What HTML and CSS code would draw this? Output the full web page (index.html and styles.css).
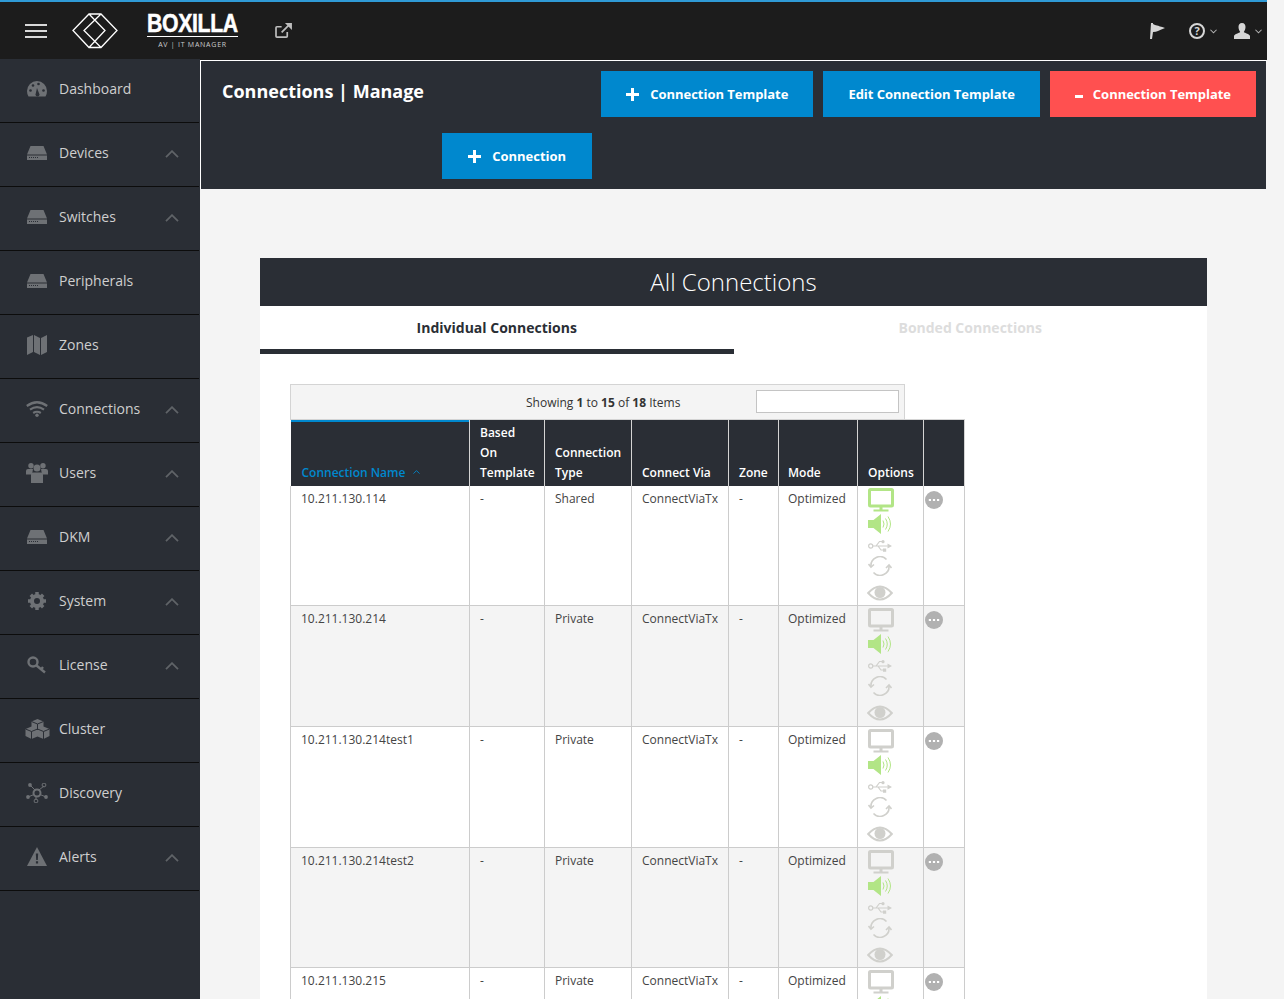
FILE: index.html
```html
<!DOCTYPE html>
<html lang="en">
<head>
<meta charset="utf-8">
<title>Connections | Manage</title>
<link rel="stylesheet" href="styles.css">
</head>
<body>
<svg class="defs" width="0" height="0" aria-hidden="true">
  <symbol id="i-box" viewBox="0 0 20 14"><path fill="currentColor" d="M3.500 0h13L20 8.500H0z"/><path fill="currentColor" d="M0 9.500h20V14H0z"/><path stroke="#2a2e35" stroke-width="1" stroke-dasharray="1 1" d="M2 11.500h9"/></symbol>
  <symbol id="i-monitor" viewBox="0 0 26 24"><rect x="1.500" y="1.500" width="23" height="16.500" rx="1" fill="none" stroke="currentColor" stroke-width="3"/><path fill="currentColor" d="M11.500 19h3v2.500h6V23.500h-15V21.500h6z"/></symbol>
  <symbol id="i-speaker" viewBox="0 0 24 20"><path fill="currentColor" d="M0 6h5.500L13 0v20l-7.500-6H0z"/><path fill="none" stroke="currentColor" d="M15 6.500q2 3.500 0 7M17.500 4.500q3.500 5.500 0 11M20 2.500q5 7.500 0 15"/></symbol>
  <symbol id="i-usb" viewBox="0 0 24 12"><circle cx="2.700" cy="6" r="2.100" fill="none" stroke="currentColor" stroke-width="1.200"/><path fill="none" stroke="currentColor" stroke-width="1.200" d="M4.800 6h15M8 6l3.500-4.500H14M10 6l3 4h2"/><circle cx="15" cy="1.700" r="1.600" fill="currentColor"/><path fill="currentColor" d="M15 8.500h3.200v3.200H15zM19.500 3.500l4.500 2.500-4.500 2.500z"/></symbol>
  <symbol id="i-sync" viewBox="0 0 24 20"><path fill="none" stroke="currentColor" stroke-width="1.600" d="M3 10.500a9 9 0 0 1 15.500-7M21 9.500a9 9 0 0 1-15.500 7"/><path fill="none" stroke="currentColor" stroke-width="1.600" d="M.5 8l2.500 3 3-2.500M18 12l3-3 2.500 3"/></symbol>
  <symbol id="i-eye" viewBox="0 0 26 16"><path fill="none" stroke="currentColor" stroke-width="2" d="M1.200 8q11.800-13 23.600 0q-11.800 13-23.600 0z"/><circle cx="13" cy="7.500" r="5.500" fill="currentColor"/></symbol>
  <symbol id="i-chev" viewBox="0 0 14 8"><path fill="none" stroke="currentColor" stroke-width="1.800" d="M1 7.200l6-6 6 6"/></symbol>
  <symbol id="i-more" viewBox="0 0 18 18"><circle cx="9" cy="9" r="9" fill="#b1b1b1"/><path fill="#fff" d="M3.800 8h2.200v2H3.800zM7.900 8h2.200v2H7.900zM12 8h2.200v2H12z"/></symbol>
  <symbol id="i-plus" viewBox="0 0 13 13"><path fill="#fff" d="M5 0h3v5h5v3H8v5H5V8H0V5h5z"/></symbol>
  <symbol id="i-down" viewBox="0 0 8 5"><path fill="none" stroke="#b5b5b5" stroke-width="1.200" d="M.5.500L4 4 7.500.500"/></symbol>
</svg>

<header class="topbar">
  <svg class="burger" viewBox="0 0 22 14" width="22" height="14"><path stroke="#d8d8d8" stroke-width="2" d="M0 1h22M0 7h22M0 13h22"/></svg>
  <svg class="logo-mark" viewBox="0 0 46 36" width="46" height="36"><path fill="none" stroke="#fff" stroke-width="1.300" d="M1 17.500L17 1h12l16 16.500L29 34.500H17zM17 1l16 16.500L17 34.500M29 1L12 17.500l17 17"/></svg>
  <div class="brand">
    <div class="brand-name"><span class="brand-word">BOXILLA</span></div>
    <div class="brand-sub">AV | IT MANAGER</div>
  </div>
  <svg class="ext" viewBox="0 0 18 16" width="17" height="15"><path fill="none" stroke="#bdbdbd" stroke-width="1.800" d="M13 9.500V14a1 1 0 0 1-1 1H2a1 1 0 0 1-1-1V5a1 1 0 0 1 1-1h5M7 10l8-8"/><path fill="#bdbdbd" d="M10.500 0H18v7.500z"/></svg>
  <div class="top-right">
    <svg class="top-flag" viewBox="0 0 15 16" width="15" height="16"><path fill="#d6d6d6" d="M1 0h2v1q2 1 4 1.500t8 2.500q-5 2-7 3t-5 1l-1 7H0z"/></svg>
    <span class="top-drop top-help"><svg viewBox="0 0 16 16" width="16" height="16"><circle cx="8" cy="8" r="7" fill="none" stroke="#d6d6d6" stroke-width="2"/><text x="8" y="12" text-anchor="middle" class="q">?</text></svg><svg width="7" height="5"><use href="#i-down"/></svg></span>
    <span class="top-drop top-user"><svg viewBox="0 0 16 16" width="16" height="16"><path fill="#d6d6d6" d="M8 0c2.500 0 3.500 2 3.500 4S10.500 8 9.800 9c1 1 5.700 2 6.200 4v3H0v-3c.500-2 5.200-3 6.200-4C5.500 8 4.500 6 4.500 4S5.500 0 8 0z"/></svg><svg width="7" height="5"><use href="#i-down"/></svg></span>
  </div>
</header>

<div class="shell">
  <nav class="sidebar">
    <a class="nav-item"><span class="nav-icon"><svg viewBox="0 0 20 16" width="20" height="16"><path fill="currentColor" d="M10 0a10 10 0 0 0-10 10q0 3 1.500 5.500h17Q20 13 20 10A10 10 0 0 0 10 0z"/><circle cx="3.500" cy="9.500" r="1.300" fill="#2a2e35"/><circle cx="6" cy="4.500" r="1.300" fill="#2a2e35"/><circle cx="11.500" cy="3" r="1.300" fill="#2a2e35"/><circle cx="16.500" cy="9.500" r="1.300" fill="#2a2e35"/><path fill="#2a2e35" d="M8.500 13.500L10 7l2.500 6.500a2 2 0 0 1-4 0z"/></svg></span><span class="nav-label">Dashboard</span></a>
    <a class="nav-item"><span class="nav-icon"><svg width="20" height="14"><use href="#i-box"/></svg></span><span class="nav-label">Devices</span><svg class="chev" width="14" height="8"><use href="#i-chev"/></svg></a>
    <a class="nav-item"><span class="nav-icon"><svg width="20" height="14"><use href="#i-box"/></svg></span><span class="nav-label">Switches</span><svg class="chev" width="14" height="8"><use href="#i-chev"/></svg></a>
    <a class="nav-item"><span class="nav-icon"><svg width="20" height="14"><use href="#i-box"/></svg></span><span class="nav-label">Peripherals</span></a>
    <a class="nav-item"><span class="nav-icon"><svg viewBox="0 0 20 20" width="20" height="20"><path fill="currentColor" d="M0 2.500l6-2.500v17l-6 3zM7 0l6 3v17l-6-3zM14 3l6-3v17l-6 3z"/></svg></span><span class="nav-label">Zones</span></a>
    <a class="nav-item"><span class="nav-icon"><svg viewBox="0 0 22 16" width="22" height="16"><path fill="none" stroke="currentColor" stroke-width="2.200" d="M.8 5q10.200-7.500 20.400 0M4 8.700q7-5 14 0M7.200 12q3.800-2.500 7.600 0"/><circle cx="11" cy="14.300" r="1.700" fill="currentColor"/></svg></span><span class="nav-label">Connections</span><svg class="chev" width="14" height="8"><use href="#i-chev"/></svg></a>
    <a class="nav-item"><span class="nav-icon"><svg viewBox="0 0 22 20" width="22" height="20"><circle cx="5" cy="2.700" r="2.700" fill="currentColor"/><circle cx="17" cy="2.700" r="2.700" fill="currentColor"/><circle cx="11" cy="5" r="3.500" fill="currentColor"/><path fill="currentColor" d="M0 8q0-2 2-2h5l-1 5.500H0zM15 6h5q2 0 2 2v3.500h-6zM7.500 9.500h7q2.500 0 2.500 2.500v8H5v-8q0-2.500 2.500-2.500z"/></svg></span><span class="nav-label">Users</span><svg class="chev" width="14" height="8"><use href="#i-chev"/></svg></a>
    <a class="nav-item"><span class="nav-icon"><svg width="20" height="14"><use href="#i-box"/></svg></span><span class="nav-label">DKM</span><svg class="chev" width="14" height="8"><use href="#i-chev"/></svg></a>
    <a class="nav-item"><span class="nav-icon"><svg viewBox="0 0 18 18" width="18" height="18"><circle cx="9" cy="9" r="5" fill="none" stroke="currentColor" stroke-width="4"/><path stroke="currentColor" stroke-width="3.500" d="M9 0v3M9 15v3M0 9h3M15 9h3M2.800 2.800l2 2M13.200 13.200l2 2M15.200 2.800l-2 2M4.800 13.200l-2 2"/></svg></span><span class="nav-label">System</span><svg class="chev" width="14" height="8"><use href="#i-chev"/></svg></a>
    <a class="nav-item"><span class="nav-icon"><svg viewBox="0 0 20 18" width="20" height="18"><circle cx="6" cy="6" r="4.500" fill="none" stroke="currentColor" stroke-width="2.400"/><path fill="none" stroke="currentColor" stroke-width="2.400" d="M9.500 9.500l8.500 7M14 13.500l2-2.500"/></svg></span><span class="nav-label">License</span><svg class="chev" width="14" height="8"><use href="#i-chev"/></svg></a>
    <a class="nav-item"><span class="nav-icon"><svg viewBox="0 0 25 20" width="25" height="20"><path fill="currentColor" d="M12.500 0l6 2.500v5l6 2.500v7l-6 3-6-2.500L6.500 20l-6-3v-7l6-2.500v-5z"/><path fill="none" stroke="#2a2e35" d="M6.500 2.500l6 2.500 6-2.500M12.500 5v6M.5 10l6 2.500 6-2.500 6 2.500 6-2.500M6.500 12.500V20M18.500 12.500V20"/></svg></span><span class="nav-label">Cluster</span></a>
    <a class="nav-item"><span class="nav-icon"><svg viewBox="0 0 22 20" width="22" height="20"><circle cx="11" cy="10" r="3.500" fill="none" stroke="currentColor" stroke-width="2"/><path stroke="currentColor" d="M5 3l4 4M18 3l-5 4M2 14l6-2.500M20 14l-6-2.500M10 14v3"/><circle cx="4" cy="2" r="1.900" fill="currentColor"/><circle cx="18" cy="2" r="1.900" fill="none" stroke="currentColor"/><circle cx="2" cy="14" r="1.900" fill="currentColor"/><circle cx="20" cy="14" r="1.900" fill="currentColor"/><circle cx="10" cy="18" r="1.900" fill="none" stroke="currentColor"/></svg></span><span class="nav-label">Discovery</span></a>
    <a class="nav-item"><span class="nav-icon"><svg viewBox="0 0 20 19" width="20" height="19"><path fill="currentColor" d="M10 0l10 19H0z"/><path fill="#2a2e35" d="M8.800 6.500h2.400l-.4 6.500H9.200zM8.900 14.300h2.200v2.200H8.900z"/></svg></span><span class="nav-label">Alerts</span><svg class="chev" width="14" height="8"><use href="#i-chev"/></svg></a>
  </nav>

  <main class="main">
    <section class="page-head">
      <h1 class="page-title">Connections | Manage</h1>
      <div class="head-actions">
        <button class="btn"><svg class="btn-icon" width="13" height="13"><use href="#i-plus"/></svg>Connection Template</button>
        <button class="btn">Edit Connection Template</button>
        <button class="btn btn-red"><span class="minus"></span>Connection Template</button>
        <button class="btn btn-conn"><svg class="btn-icon" width="13" height="13"><use href="#i-plus"/></svg>Connection</button>
      </div>
    </section>

    <section class="panel">
      <h2 class="panel-title">All Connections</h2>
      <div class="tabs">
        <div class="tab tab-active">Individual Connections</div>
        <div class="tab">Bonded Connections</div>
      </div>
      <div class="table-wrap">
        <div class="table-info">
          <span class="showing">Showing <b>1</b> to <b>15</b> of <b>18</b> Items</span>
          <input class="search" type="text" aria-label="Search">
        </div>
        <table class="grid">
          <colgroup><col class="c1"><col class="c2"><col class="c3"><col class="c4"><col class="c5"><col class="c6"><col class="c7"><col class="c8"></colgroup>
          <thead>
            <tr>
              <th class="sorted">Connection Name <svg class="caret" viewBox="0 0 14 8" width="7" height="4"><use href="#i-chev"/></svg></th>
              <th>Based On Template</th>
              <th>Connection Type</th>
              <th>Connect Via</th>
              <th>Zone</th>
              <th class="mode">Mode</th>
              <th>Options</th>
              <th></th>
            </tr>
          </thead>
          <tbody>
            <tr>
              <td>10.211.130.114</td><td>-</td><td>Shared</td><td>ConnectViaTx</td><td>-</td><td class="mode">Optimized</td>
              <td class="opts"><svg class="on" width="26" height="24"><use href="#i-monitor"/></svg><svg class="on" width="24" height="20"><use href="#i-speaker"/></svg><svg class="off" width="24" height="12"><use href="#i-usb"/></svg><svg class="off" width="24" height="20"><use href="#i-sync"/></svg><svg class="off" width="26" height="16"><use href="#i-eye"/></svg></td>
              <td class="more-cell"><svg width="18" height="18"><use href="#i-more"/></svg></td>
            </tr>
            <tr class="alt">
              <td>10.211.130.214</td><td>-</td><td>Private</td><td>ConnectViaTx</td><td>-</td><td class="mode">Optimized</td>
              <td class="opts"><svg class="off" width="26" height="24"><use href="#i-monitor"/></svg><svg class="on" width="24" height="20"><use href="#i-speaker"/></svg><svg class="off" width="24" height="12"><use href="#i-usb"/></svg><svg class="off" width="24" height="20"><use href="#i-sync"/></svg><svg class="off" width="26" height="16"><use href="#i-eye"/></svg></td>
              <td class="more-cell"><svg width="18" height="18"><use href="#i-more"/></svg></td>
            </tr>
            <tr>
              <td>10.211.130.214test1</td><td>-</td><td>Private</td><td>ConnectViaTx</td><td>-</td><td class="mode">Optimized</td>
              <td class="opts"><svg class="off" width="26" height="24"><use href="#i-monitor"/></svg><svg class="on" width="24" height="20"><use href="#i-speaker"/></svg><svg class="off" width="24" height="12"><use href="#i-usb"/></svg><svg class="off" width="24" height="20"><use href="#i-sync"/></svg><svg class="off" width="26" height="16"><use href="#i-eye"/></svg></td>
              <td class="more-cell"><svg width="18" height="18"><use href="#i-more"/></svg></td>
            </tr>
            <tr class="alt">
              <td>10.211.130.214test2</td><td>-</td><td>Private</td><td>ConnectViaTx</td><td>-</td><td class="mode">Optimized</td>
              <td class="opts"><svg class="off" width="26" height="24"><use href="#i-monitor"/></svg><svg class="on" width="24" height="20"><use href="#i-speaker"/></svg><svg class="off" width="24" height="12"><use href="#i-usb"/></svg><svg class="off" width="24" height="20"><use href="#i-sync"/></svg><svg class="off" width="26" height="16"><use href="#i-eye"/></svg></td>
              <td class="more-cell"><svg width="18" height="18"><use href="#i-more"/></svg></td>
            </tr>
            <tr>
              <td>10.211.130.215</td><td>-</td><td>Private</td><td>ConnectViaTx</td><td>-</td><td class="mode">Optimized</td>
              <td class="opts"><svg class="off" width="26" height="24"><use href="#i-monitor"/></svg><svg class="on" width="24" height="20"><use href="#i-speaker"/></svg><svg class="off" width="24" height="12"><use href="#i-usb"/></svg><svg class="off" width="24" height="20"><use href="#i-sync"/></svg><svg class="off" width="26" height="16"><use href="#i-eye"/></svg></td>
              <td class="more-cell"><svg width="18" height="18"><use href="#i-more"/></svg></td>
            </tr>
          </tbody>
        </table>
      </div>
    </section>
  </main>
</div>
</body>
</html>
```
FILE: styles.css
```css
* { box-sizing: border-box; }
html, body { height: 100%; }
body {
  margin: 0;
  height: 999px;
  overflow: hidden;
  background: #f4f4f4;
  font-family: "Open Sans", sans-serif;
  font-size: 13px;
  color: #333;
}
.defs { display: block; height: 0; }
.topbar {
  width: 1267px;
  height: 60px;
  background: #1c1c1c;
  border-top: 2px solid #2f9ad6;
  display: flex;
  align-items: center;
  padding: 0 5px 0 25px;
}
.logo-mark { margin-left: 25px; }
.brand { margin: 0 0 4px 29px; width: 91px; color: #fff; text-align: center; }
.brand-name { height: 25px; border-bottom: 1px solid #fff; line-height: 22px; margin-top: 1px; text-align: left; white-space: nowrap; }
.brand-word { display: inline-block; font-family: "Liberation Sans", sans-serif; font-weight: 700; font-size: 25px; letter-spacing: -.4px; transform: scaleX(.85); transform-origin: left center; -webkit-text-stroke: .5px #fff; }
.brand-sub { font-size: 7px; line-height: 14px; letter-spacing: .75px; color: #ccc; padding-top: 1px; height: 11px; }
.ext { margin: 0 0 2px 37px; }
.top-right { margin-left: auto; display: flex; align-items: center; }
.top-flag { margin-right: 24px; }
.top-drop { display: flex; align-items: center; gap: 5px; }
.top-help { margin-right: 17px; }
.q { font: 700 11px "Open Sans", sans-serif; fill: #d6d6d6; }

.shell { display: flex; width: 1284px; height: 939px; }
.sidebar { width: 200px; flex: none; margin-top: -1px; background: #2a2e35; }
.nav-item {
  height: 64px;
  width: 199px;
  display: flex;
  align-items: center;
  padding: 0 20px 4px 0;
  border-bottom: 1px solid #0c0c0c;
  color: #cfcfcf;
  font-size: 14px;
}
.nav-icon { width: 42px; margin: 0 1px 0 16px; flex: none; display: flex; justify-content: center; color: #6e7175; }
.nav-label { flex: 1; }
.chev { color: #5f6367; margin-top: 2px; }

.main { width: 1066px; flex: none; }
.page-head {
  height: 129px;
  background: #2a2e35;
  border: 1px solid #fff;
  border-width: 1px 0 0 1px;
  position: relative;
}
.page-title { position: absolute; left: 21px; top: 18px; margin: 0; color: #fff; font-size: 18px; font-weight: 700; line-height: 25px; }
.head-actions { display: flex; flex-wrap: wrap; justify-content: flex-end; gap: 16px 10px; padding: 10px 10px 0 0; }
.btn {
  height: 46px;
  border: 0;
  background: #0088ce;
  color: #fff;
  font: 700 13px "Open Sans", sans-serif;
  letter-spacing: -.03px;
  padding: 0 25px;
  display: flex;
  align-items: center;
}
.btn-red { background: #ff5050; }
.btn-conn { margin-right: 664px; padding: 0 26px; }
.btn-icon { margin-right: 11px; }
.minus { display: block; width: 8px; height: 3px; background: #fff; margin: 5px 10px 0 0; }

.panel { margin: 69px 0 0 60px; width: 947px; min-height: 800px; background: #fff; }
.panel-title { margin: 0; height: 48px; background: #2a2e35; color: #fff; font-size: 24px; font-weight: 300; text-align: center; line-height: 48px; }
.tabs { display: flex; height: 48px; }
.tab { width: 474px; text-align: center; font-size: 14px; font-weight: 700; color: #ddd; line-height: 44px; }
.tab-active { color: #2a2e35; border-bottom: 5px solid #2a2e35; }
.table-wrap { padding: 30px 0 0 30px; }
.table-info { width: 615px; height: 36px; background: #f4f4f4; border: 1px solid #d4d4d4; border-bottom: 0; display: flex; align-items: flex-start; }
.showing { margin: 9px 0 0 235px; font-size: 12px; width: 230px; line-height: 18px; }
.search { width: 143px; height: 23px; margin-top: 5px; background: #fff; border: 1px solid #c4c4c4; }

.grid { border-collapse: collapse; table-layout: fixed; width: 674px; margin-top: -1px; font-size: 12px; }
.c1 { width: 179px; } .c2 { width: 75px; } .c3 { width: 87px; } .c4 { width: 97px; }
.c5 { width: 50px; } .c6 { width: 79px; } .c7 { width: 66px; } .c8 { width: 41px; }
.grid th {
  background: #2a2e35;
  color: #fff;
  text-align: left;
  vertical-align: bottom;
  font-weight: 600;
  line-height: 20px;
  padding: 0 10px 3px;
  border-right: 1px solid #d4d4d4;
  border-top: 1px solid #d4d4d4;
  height: 66px;
}
.grid th.sorted { color: #0088ce; padding-left: 11px; box-shadow: inset 0 2px 0 #0088ce; }
.caret { margin: 0 0 3px 4px; }
.grid td {
  vertical-align: top;
  padding: 3px 10px 0;
  line-height: 20px;
  border: 1px solid #ccc;
  border-top: 0;
  height: 121px;
  color: #444;
}
.grid tr:nth-child(3n+1) td { height: 120px; }
.grid .mode { padding-left: 9px; }
.alt td { background: #f4f4f4; }
.grid td.opts { padding: 2px 0 0 10px; }
.opts svg { display: block; }
.on { color: #b2e586; }
.off { color: #d0d0cc; }
.opts svg:nth-child(2) { margin-top: 2px; }
.opts svg:nth-child(3) { margin-top: 6px; }
.opts svg:nth-child(4) { margin-top: 4px; }
.opts svg:nth-child(5) { margin: 9px 0 0 -1px; }
.grid td.more-cell { padding: 5px 0 0 1px; }
.more-cell svg { display: block; }
```
